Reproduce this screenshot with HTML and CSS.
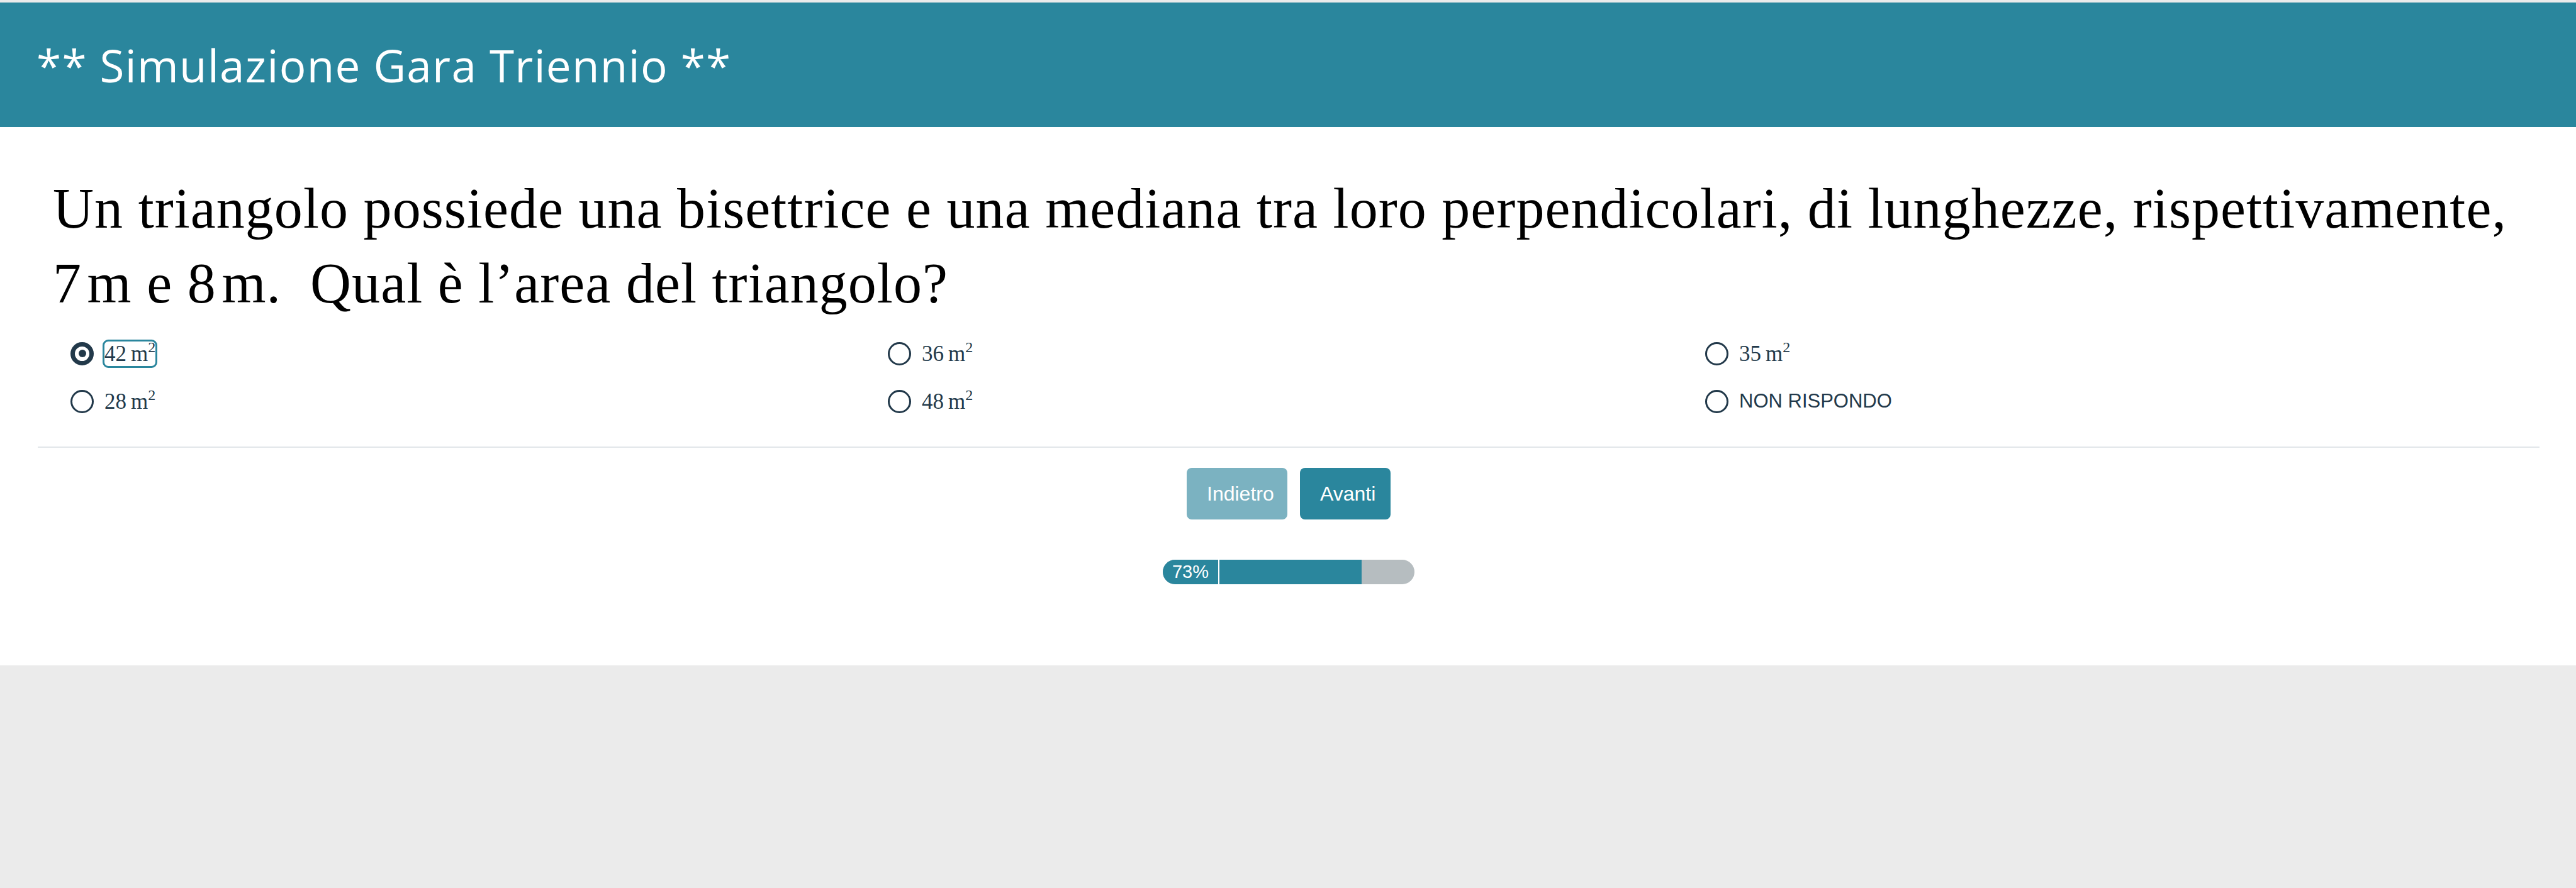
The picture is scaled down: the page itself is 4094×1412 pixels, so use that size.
FILE: index.html
```html
<!DOCTYPE html>
<html lang="it">
<head>
<meta charset="utf-8">
<title>Simulazione Gara Triennio</title>
<link rel="stylesheet" href="styles.css">
</head>
<body>
<div class="page">
  <header class="topbar">
    <h1 class="title">** Simulazione Gara Triennio **</h1>
  </header>
  <main class="quiz">
    <p class="question">Un triangolo possiede una bisettrice e una mediana tra loro perpendicolari, di lunghezze, rispettivamente, 7&#8202;m e 8&#8202;m.&#8194;Qual è l’area del triangolo?</p>
    <div class="options">
      <label class="option"><span class="radio checked"></span><span class="ans math focus">42&#8201;m<sup>2</sup></span></label>
      <label class="option"><span class="radio"></span><span class="ans math">36&#8201;m<sup>2</sup></span></label>
      <label class="option"><span class="radio"></span><span class="ans math">35&#8201;m<sup>2</sup></span></label>
      <label class="option"><span class="radio"></span><span class="ans math">28&#8201;m<sup>2</sup></span></label>
      <label class="option"><span class="radio"></span><span class="ans math">48&#8201;m<sup>2</sup></span></label>
      <label class="option"><span class="radio"></span><span class="ans plain">NON RISPONDO</span></label>
    </div>
    <hr class="divider">
    <div class="nav">
      <button class="btn btn-back">Indietro</button>
      <button class="btn btn-next">Avanti</button>
    </div>
    <div class="progress">
      <span class="progress-label">73%</span>
      <span class="progress-track"><span class="progress-fill" style="width:73%"></span></span>
    </div>
  </main>
  <div class="footer-area"></div>
</div>
</body>
</html>
```
FILE: styles.css
```css
html, body {
  margin: 0;
  padding: 0;
  background: #ebebeb;
}
.page {
  display: flex;
  flex-direction: column;
  min-height: 1412px;
}
.topbar {
  margin-top: 4px;
  height: 198px;
  background: #2a869d;
  display: flex;
  align-items: center;
  padding-left: 58px;
}
.title {
  margin: 0;
  font-family: "Open Sans", sans-serif;
  font-weight: 400;
  font-size: 71px;
  color: #ffffff;
  letter-spacing: 1.3px;
}
.quiz {
  background: #ffffff;
  padding: 70px 58px 129px 60px;
}
.question {
  margin: 0 30px 14px 24px;
  font-family: "Liberation Serif", serif;
  font-size: 90px;
  line-height: 119px;
  letter-spacing: 1.05px;
  color: #000000;
}
.options {
  display: grid;
  grid-template-columns: repeat(3, 1299px);
  grid-auto-rows: 76px;
  padding-left: 52px;
}
.option {
  display: flex;
  align-items: center;
  gap: 17px;
  color: #22394a;
}
.radio {
  box-sizing: border-box;
  width: 37px;
  height: 37px;
  border: 3.5px solid #22394a;
  border-radius: 50%;
  display: flex;
  align-items: center;
  justify-content: center;
  flex: none;
}
.radio.checked {
  border-width: 7px;
}
.radio.checked::after {
  content: "";
  width: 12px;
  height: 12px;
  border-radius: 50%;
  background: #22394a;
}
.ans.math {
  font-family: "Liberation Serif", serif;
  font-size: 35px;
  line-height: 39px;
}
.ans.math sup {
  font-size: 24px;
  line-height: 0;
  vertical-align: 14px;
}
.ans.plain {
  font-family: "Liberation Sans", Arial, sans-serif;
  font-size: 31px;
}
.focus {
  outline: 3px solid #2a869d;
  border-radius: 6px;
}
.divider {
  margin: 34px 0 0 0;
  border: 0;
  height: 2px;
  background: #e2e6ea;
}
.nav {
  display: flex;
  justify-content: center;
  gap: 20px;
  margin-top: 32px;
}
.btn {
  height: 82px;
  border: 0;
  border-radius: 8px;
  font-family: "Liberation Sans", Arial, sans-serif;
  font-size: 32px;
  color: #ffffff;
  padding: 0 32px;
}
.btn-back {
  width: 160px;
  background: #7bb2c1;
}
.btn-next {
  width: 144px;
  background: #2a869d;
}
.progress {
  margin: 64px auto 0;
  width: 400px;
  height: 39px;
  display: flex;
  border-radius: 20px;
  overflow: hidden;
  background: #b6bdc0;
}
.progress-label {
  width: 88px;
  flex: none;
  background: #2a869d;
  border-right: 2px solid #ffffff;
  color: #ffffff;
  font-family: "Liberation Sans", Arial, sans-serif;
  font-size: 29px;
  line-height: 39px;
  text-align: center;
}
.progress-track {
  flex: 1;
  display: flex;
}
.progress-fill {
  background: #2a869d;
  height: 100%;
}
.footer-area {
  flex: 1;
}
```
